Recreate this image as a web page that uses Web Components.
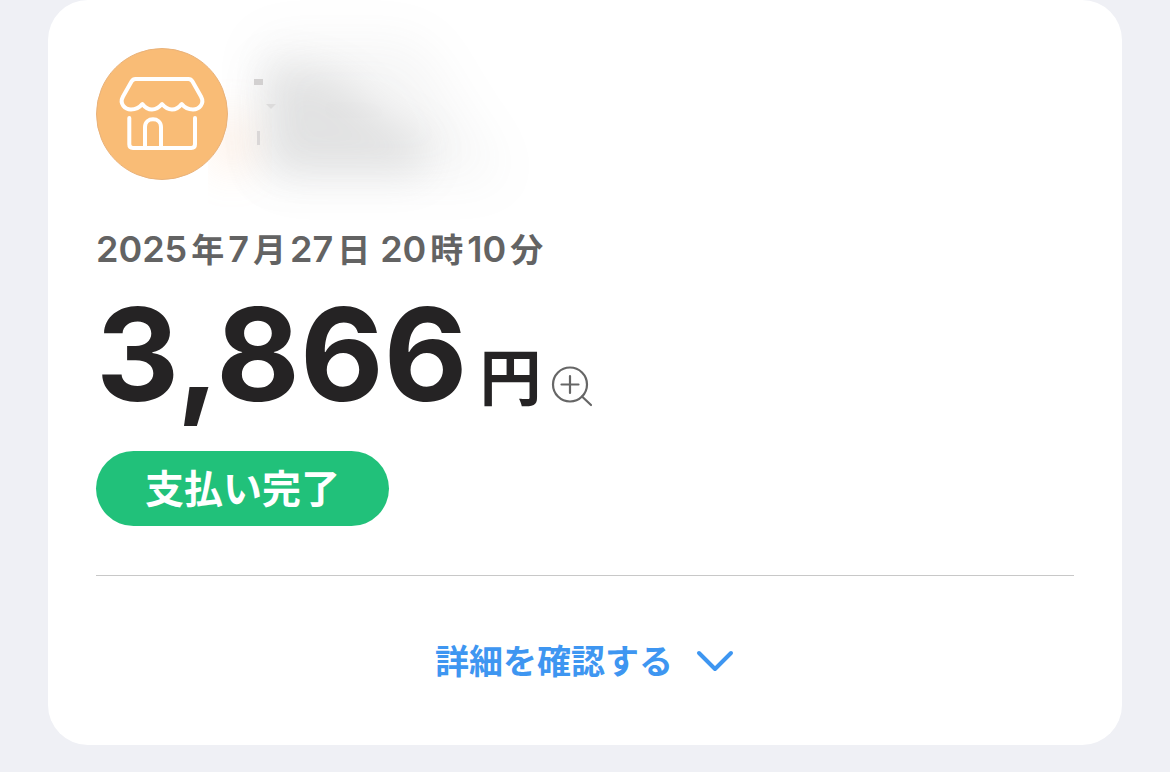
<!DOCTYPE html>
<html lang="ja">
<head>
<meta charset="utf-8">
<meta name="viewport" content="width=device-width, initial-scale=1">
<title>支払い完了</title>
<style>
  html, body { margin: 0; }
  body {
    background: #eff0f5;
    color: #252324;
    font-family: Inter, "Noto Sans CJK JP", sans-serif;
  }
</style>
</head>
<body>
<receipt-card>
  <merchant-header slot="header"></merchant-header>
  <receipt-date></receipt-date>
  <pay-amount unit="円">3,866</pay-amount>
  <status-pill>支払い完了</status-pill>
  <detail-toggle slot="footer">詳細を確認する</detail-toggle>
</receipt-card>

<script>
  const define = (name, html) => customElements.define(name, class extends HTMLElement {
    constructor() {
      super();
      this.attachShadow({ mode: "open" }).innerHTML = html;
      const unit = this.shadowRoot.querySelector("[data-unit]");
      if (unit) unit.textContent = this.getAttribute("unit");
    }
  });

  define("receipt-card", `
    <style>
      :host { display: block; padding: 0 48px 27px; }
      article { background: #fff; border-radius: 40px; padding: 48px 48px 59px; }
      .body { display: flex; flex-direction: column; align-items: flex-start; margin-top: 48px; }
      footer { border-top: 1px solid #c8c8c8; margin-top: 49px; padding-top: 62px; }
    </style>
    <article>
      <slot name="header"></slot>
      <div class="body"><slot></slot></div>
      <footer><slot name="footer"></slot></footer>
    </article>`);

  define("merchant-header", `
    <style>
      :host { display: flex; position: relative; }
      .store { display: block; width: 132px; height: 132px; position: relative; }
      .name { position: absolute; left: 112px; top: -48px; width: 370px; height: 230px; }
    </style>
    <svg class="name" viewBox="0 0 370 230" aria-hidden="true">
      <defs>
        <filter id="soft" x="-50%" y="-50%" width="200%" height="200%"><feGaussianBlur stdDeviation="20"/></filter>
        <filter id="wide" x="-50%" y="-50%" width="200%" height="200%"><feGaussianBlur stdDeviation="26"/></filter>
      </defs>
      <ellipse cx="24" cy="143" rx="20" ry="32" fill="#f6b482" opacity=".2" filter="url(#soft)"/>
      <path d="M50 40H210L250 110L300 180H60Z" fill="#808284" opacity=".07" filter="url(#wide)"/>
      <path d="M55 62L130 75L175 115L222 140L215 175H55Z" fill="#808284" opacity=".17" filter="url(#soft)"/>
      <path d="M46 79H55V85H46Z" fill="#d2d0d0"/>
      <path d="M49 131H52V145H49Z" fill="#dad7d7"/>
      <path d="M58 104H68L63 109Z" fill="#dcdbdb"/>
    </svg>
    <svg class="store" viewBox="0 0 132 132" aria-hidden="true">
      <circle cx="66" cy="66" r="65.5" fill="#f9bc76" stroke="#e9b27a"/>
      <g fill="none" stroke="#fff" stroke-width="4" stroke-linecap="round" stroke-linejoin="round">
        <path d="M39.500 31H92.500Q95 31 96.500 33.500L105 48.500C109 56 103 61.500 97 61.500C92 61.500 88.500 59.500 85.700 56C83 59.500 80 61.500 76 61.500C72 61.500 69 59.500 66 56C63 59.500 60 61.500 56 61.500C52 61.500 49 59.500 46.300 56C43.500 59.500 40 61.500 35 61.500C29 61.500 23 56 27 48.500L35.500 33.500Q37 31 39.500 31Z"/>
        <path d="M33.300 70V96.300Q33.300 100 37 100H95.300Q99 100 99 96.300V70"/>
        <path d="M49 100V79C49 68.700 65 68.700 65 79V100"/>
      </g>
    </svg>`);

  define("receipt-date", `
    <style>
      :host { display: block; color: #636363; font-weight: 600; }
      time { display: flex; align-items: baseline; gap: 4px; height: 42px; line-height: 42px; font-size: 36px; }
      i { font-style: normal; font-size: 33px; }
      .hour { margin-left: 6px; }
    </style>
    <time datetime="2025-07-27T20:10"><span>2025</span><i>年</i><span>7</span><i>月</i><span>27</span><i>日</i><span class="hour">20</span><i>時</i><span>10</span><i>分</i></time>`);

  define("pay-amount", `
    <style>
      :host { display: flex; align-items: baseline; height: 181px; line-height: 168px; font-weight: 700; font-size: 129px; }
      .unit { font-size: 62px; margin-left: 12px; }
      button { border: 0; background: none; padding: 0; margin-left: 8px; width: 44px; height: 44px; align-self: flex-start; margin-top: 94px; }
      svg { display: block; width: 44px; height: 44px; }
    </style>
    <slot></slot><span class="unit" data-unit></span>
    <button type="button" aria-label="拡大">
      <svg viewBox="0 0 44 44" fill="none" stroke="#666" stroke-width="2.2">
        <circle cx="20" cy="20.500" r="17"/>
        <path d="M20 12V29M11.500 20.500H28.500M32 32.500L41 41" stroke-linecap="round"/>
      </svg>
    </button>`);

  define("status-pill", `
    <style>
      :host { display: block; box-sizing: border-box; height: 75px; padding: 0 49px; border-radius: 38px;
        background: #21c17a; color: #fff; font-size: 39px; font-weight: 700; line-height: 75px; }
    </style>
    <slot></slot>`);

  define("detail-toggle", `
    <style>
      :host { display: flex; justify-content: center; }
      button { display: flex; align-items: center; gap: 22px; padding: 0; border: 0; background: none;
        color: #3e96f1; font: inherit; font-size: 34px; font-weight: 700; line-height: 48px; }
      svg { display: block; width: 40px; height: 24px; }
    </style>
    <button type="button" aria-expanded="false"><slot></slot>
      <svg viewBox="0 0 40 24" fill="none" stroke="currentColor" stroke-width="4" stroke-linecap="round" stroke-linejoin="round" aria-hidden="true"><path d="M4 3L20 19L36 3"/></svg>
    </button>`);
</script>
</body>
</html>
